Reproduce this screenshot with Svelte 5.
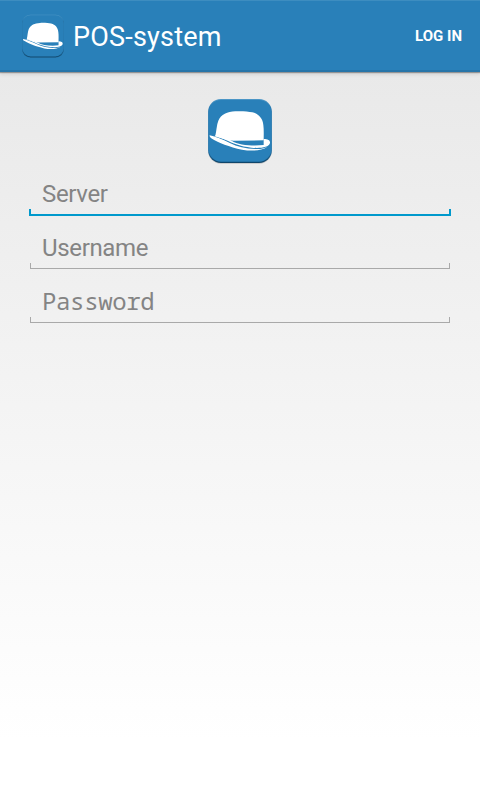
<script>
  const fields = [
    { label: 'Server', type: 'focus' },
    { label: 'Username', type: '' },
    { label: 'Password', type: 'mono' }
  ];
</script>

{#snippet hat(cls)}
  <svg class={cls} viewBox="24 24 192 198" preserveAspectRatio="none">
    <defs>
      <linearGradient id="edge-{cls}" x1="0" y1="0" x2="0" y2="1">
        <stop offset="0" stop-color="#4d97c7" />
        <stop offset=".15" stop-color="#2a7ab0" />
        <stop offset=".8" stop-color="#2371a6" />
        <stop offset="1" stop-color="#0f4468" />
      </linearGradient>
    </defs>
    <rect x="24.5" y="31" width="191" height="190" rx="38" fill="#000" opacity=".18" />
    <rect x="24.5" y="27" width="191" height="192" rx="38" fill="url(#edge-{cls})" />
    <rect x="26" y="30" width="188" height="185" rx="37" fill="#2980b9" />
    <path fill="#fff" d="M46 137 C50 120 50 104 55 92 C63 73 82 65 106 64 C122 63 145 64 157 67 C177 72 188 86 190 105 C192 120 191 136 191 151 L100 152 C80 150 62 145 46 137Z" />
    <path fill="#fff" d="M29 136 C48 140 67 148 88 158 C112 170 137 176 166 177 C181 178 191 175 202 171 C183 183 154 184 126 179 C88 171 55 157 36 146 C31 143 28 140 29 136Z" />
    <path fill="#fff" d="M46 136 C67 143 82 145 95 152 C116 165 157 169 191 165 L191 147 C204 147 211 151 210 159 C207 173 180 175 154 173 C121 170 97 159 79 151 C67 146 58 143 44 139Z" />
  </svg>
{/snippet}

<div class="screen">
  <header>
    {@render hat('small')}
    <h1>POS-system</h1>
    <button>LOG IN</button>
  </header>
  <main>
    {@render hat('large')}
    {#each fields as f}
      <div class="field {f.type}"><span>{f.label}</span><i></i></div>
    {/each}
  </main>
</div>

<style>
  .screen {
    width: 480px;
    height: 800px;
    overflow: hidden;
    display: flex;
    flex-direction: column;
    font-family: Roboto, sans-serif;
    background: linear-gradient(#e8e8e8 0, #e9e9e9 72px, #fff 740px);
  }
  header {
    box-sizing: border-box;
    height: 72px;
    flex: none;
    display: flex;
    align-items: center;
    padding: 0 18px 0 22px;
    background: #2980b9;
    border-top: 1px solid #3d8dc0;
    border-bottom: 2px solid #2775a9;
    box-shadow: 0 1px 1px rgba(0, 0, 0, .3), 0 2px 4px rgba(0, 0, 0, .12);
  }
  .small { width: 42px; height: 44px; margin-top: 1px; }
  h1 {
    margin: 3px 0 0 9px;
    font-size: 27px;
    line-height: 32px;
    font-weight: 400;
    letter-spacing: .2px;
    color: #fff;
    flex: 1;
  }
  button {
    border: 0;
    padding: 0;
    background: none;
    color: #fff;
    font: 700 15px/18px Roboto, sans-serif;
  }
  main {
    display: flex;
    flex-direction: column;
    align-items: center;
    padding-top: 26px;
  }
  .large { width: 64px; height: 66px; margin-bottom: 2px; }
  .field {
    width: 420px;
    height: 54px;
    display: flex;
    flex-direction: column;
    justify-content: flex-end;
    color: #848484;
    font-size: 24px;
    line-height: 28px;
    letter-spacing: -.35px;
  }
  .field:nth-of-type(1) { height: 49px; }
  span { padding-left: 12px; margin-bottom: 1px; white-space: nowrap; }
  i {
    box-sizing: border-box;
    height: 6px;
    border: 1px solid #a9a9a9;
    border-top: 0;
  }
  .focus i {
    height: 7px;
    margin: 0 -1px -1px;
    border: 2px solid #0099cc;
    border-top: 0;
  }
  .mono span {
    margin-bottom: 2px;
    font-family: "Droid Sans Mono", "Noto Sans Mono", "DejaVu Sans Mono", monospace;
  }
</style>
